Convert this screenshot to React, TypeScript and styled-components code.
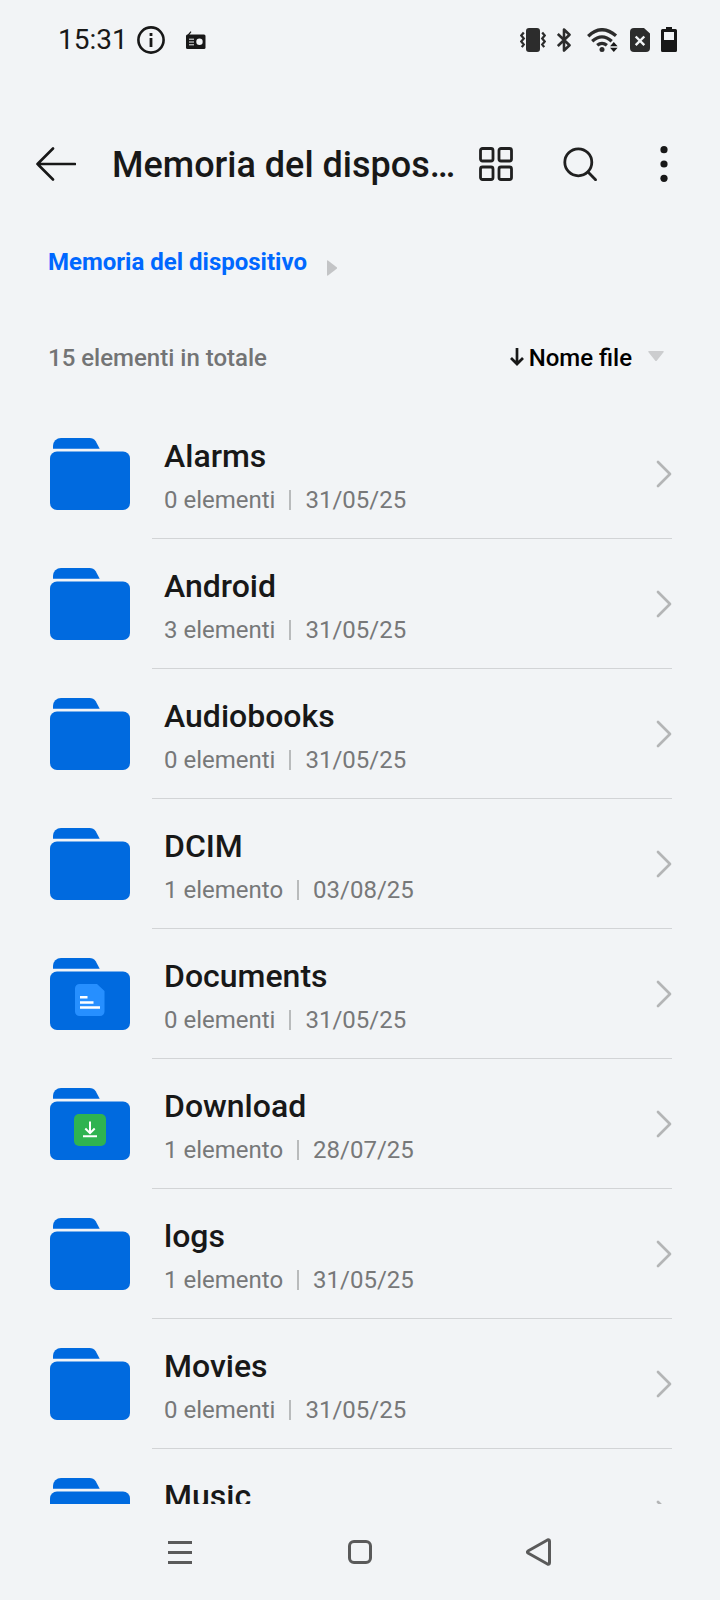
import React from "react";
import styled, { createGlobalStyle } from "styled-components";

const GlobalStyle = createGlobalStyle`
  * { box-sizing: border-box; }
  body {
    margin: 0;
    background: #f2f4f6;
    color: #181818;
    font-family: Roboto, "Liberation Sans", sans-serif;
  }
  button, select { font: inherit; color: inherit; background: none; border: 0; padding: 0; margin: 0; }
  svg { display: block; flex: none; }
`;

const Screen = styled.div`
  display: flex;
  flex-direction: column;
  height: 100vh;
`;

const StatusBar = styled.div`
  display: flex;
  flex: none;
  align-items: center;
  justify-content: space-between;
  height: 80px;
  padding: 0 43px 0 58px;
`;

const StatusGroup = styled.div<{ $gap: number }>`
  display: flex;
  align-items: center;
  gap: ${(p) => p.$gap}px;
`;

const Clock = styled.time`
  font-size: 28px;
  line-height: 32px;
`;

const Header = styled.header`
  display: flex;
  flex: none;
  align-items: center;
  height: 96px;
  margin-top: 36px;
  padding: 0 39px 0 36px;
`;

const Title = styled.h1`
  flex: 1;
  min-width: 0;
  margin: 0 20px 0 36px;
  padding-top: 2px;
  overflow: hidden;
  font-size: 36px;
  font-weight: 500;
  line-height: 48px;
  text-overflow: ellipsis;
  white-space: nowrap;
`;

const Actions = styled.div`
  display: flex;
  gap: 50px;
`;

const IconButton = styled.button`
  display: flex;
  flex: none;
  align-items: center;
  justify-content: center;
  cursor: pointer;
`;

const Breadcrumbs = styled.nav`
  display: flex;
  flex: none;
  align-items: center;
  gap: 20px;
  height: 100px;
  padding: 0 48px;

  svg { margin-top: 12px; }
`;

const CrumbLink = styled.a`
  color: #0068ff;
  font-size: 24px;
  font-weight: 700;
  line-height: 32px;
  text-decoration: none;
`;

const Summary = styled.div`
  display: flex;
  flex: none;
  align-items: center;
  justify-content: space-between;
  height: 92px;
  padding: 0 56px 0 48px;
  font-size: 24px;
  font-weight: 500;
  line-height: 32px;
`;

const Total = styled.span`
  color: #737475;
`;

const SortControl = styled.label`
  display: flex;
  align-items: center;
  color: #000;
`;

const SortSelect = styled.select`
  appearance: none;
  field-sizing: content;
  margin: 0 16px 0 5px;
  outline: 0;
`;

const FolderList = styled.ul`
  flex: 1;
  min-height: 0;
  margin: 0;
  padding: 5px 48px 0 50px;
  overflow: hidden;
  list-style: none;
`;

const FolderLink = styled.a`
  display: flex;
  align-items: center;
  gap: 22px;
  color: inherit;
  text-decoration: none;
`;

const RowBody = styled.div`
  display: flex;
  flex: 1;
  align-items: center;
  justify-content: space-between;
  height: 130px;
  padding-left: 12px;
  border-bottom: 1px solid #d2d4d6;
`;

const FolderText = styled.div`
  display: flex;
  flex-direction: column;
  gap: 8px;
`;

const FolderName = styled.span`
  font-size: 32px;
  font-weight: 500;
  line-height: 44px;
`;

const Meta = styled.span`
  display: flex;
  align-items: center;
  gap: 14px;
  color: #777879;
  font-size: 24px;
  line-height: 28px;
`;

const Separator = styled.i`
  width: 2px;
  height: 20px;
  background: #b9bbbc;
`;

const SystemNav = styled.nav`
  display: grid;
  flex: none;
  grid-template-columns: repeat(3, 1fr);
  height: 96px;
  padding: 0 12.5%;
`;

type Badge = "document" | "download";

const folders: { name: string; count: string; date: string; badge?: Badge }[] = [
  { name: "Alarms", count: "0 elementi", date: "31/05/25" },
  { name: "Android", count: "3 elementi", date: "31/05/25" },
  { name: "Audiobooks", count: "0 elementi", date: "31/05/25" },
  { name: "DCIM", count: "1 elemento", date: "03/08/25" },
  { name: "Documents", count: "0 elementi", date: "31/05/25", badge: "document" },
  { name: "Download", count: "1 elemento", date: "28/07/25", badge: "download" },
  { name: "logs", count: "1 elemento", date: "31/05/25" },
  { name: "Movies", count: "0 elementi", date: "31/05/25" },
  { name: "Music", count: "0 elementi", date: "31/05/25" },
];

const FolderIcon = ({ badge }: { badge?: Badge }) => (
  <svg width="80" height="72" viewBox="0 0 80 72" aria-hidden="true">
    <path d="M3 10.700V8a8 8 0 0 1 8-8h28.500q4 0 6.200 3.200L49.700 10.700Z" fill="#006adf" />
    <rect y="13.500" width="80" height="58.500" rx="7" fill="#006adf" />
    {badge === "document" && (
      <>
        <path d="M29.500 26H47l7.500 7v20.500a4.500 4.500 0 0 1-4.500 4.500H29.500a4.500 4.500 0 0 1-4.500-4.500v-23a4.500 4.500 0 0 1 4.500-4.500Z" fill="#268fff" />
        <path d="M30 39.200h7.500M30 44.400h13.500M30 49.500h20" stroke="#fff" strokeWidth="2.500" />
      </>
    )}
    {badge === "download" && (
      <>
        <rect x="24" y="26" width="32" height="32" rx="5" fill="#2fb350" />
        <path d="M40 33.500V45M35.300 40.500 40 45.200l4.700-4.700M33 48.300h14" fill="none" stroke="#fff" strokeWidth="2" />
      </>
    )}
  </svg>
);

const ChevronIcon = () => (
  <svg width="16" height="28" viewBox="0 0 16 28" fill="none" stroke="#b4b5b6" strokeWidth="2.700" strokeLinecap="round" strokeLinejoin="round" aria-hidden="true">
    <path d="M2 2 14 14 2 26" />
  </svg>
);

const InfoIcon = () => (
  <svg width="28" height="28" viewBox="0 0 28 28" fill="none" stroke="#181818" aria-hidden="true">
    <circle cx="14" cy="14" r="12.600" strokeWidth="2.600" />
    <path d="M14 12v9" strokeWidth="2.800" />
    <path d="M14 7v3" strokeWidth="2.800" />
  </svg>
);

const RadioIcon = () => (
  <svg width="20" height="18" viewBox="0 0 20 18" aria-hidden="true">
    <path d="M1.500 5 5 .7" stroke="#181818" strokeWidth="1.200" />
    <rect x="0" y="3.500" width="19.500" height="14.500" rx="1.500" fill="#181818" />
    <path d="M3 8.200h5M3 11h5M3 13.800h5" stroke="#f2f4f6" strokeWidth="1" />
    <circle cx="13.500" cy="10.800" r="3.200" fill="#f2f4f6" />
  </svg>
);

const VibrateIcon = () => (
  <svg width="26" height="24" viewBox="0 0 26 24" aria-hidden="true">
    <rect x="6" width="14" height="24" rx="3" fill="#2c2c2c" />
    <path d="M3.800 4.500 1.300 7.500l2.500 3-2.500 3 2.500 3-2 2.700M22.200 4.500l2.500 3-2.500 3 2.500 3-2.500 3 2 2.700" fill="none" stroke="#2c2c2c" strokeWidth="2.200" />
  </svg>
);

const BluetoothIcon = () => (
  <svg width="14" height="24" viewBox="0 0 14 24" fill="none" stroke="#2c2c2c" strokeWidth="2.600" strokeLinejoin="round" aria-hidden="true">
    <path d="M.8 6 12.500 17.300 7 22.500v-21l5.500 5.200L.8 18" />
  </svg>
);

const WifiIcon = () => (
  <svg width="32" height="24" viewBox="0 0 32 24" fill="none" stroke="#2c2c2c" strokeWidth="3.300" aria-hidden="true">
    <path d="M1.200 8.200Q14.500-4.600 29 7.800" />
    <path d="M5.200 13.200q9.800-8.700 19.500 0" />
    <path d="M10.200 17.300q4.800-3.900 9.700 0" />
    <circle cx="15" cy="21.500" r="2.500" fill="#2c2c2c" stroke="none" />
    <path d="m23 18.300 3.800-4.300 3.800 4.300ZM23 19.700l3.800 4.300 3.800-4.300Z" fill="#181818" stroke="none" />
  </svg>
);

const SimIcon = () => (
  <svg width="20" height="24" viewBox="0 0 20 24" aria-hidden="true">
    <path d="M4 0h10l6 5.500V20a4 4 0 0 1-4 4H4a4 4 0 0 1-4-4V4a4 4 0 0 1 4-4Z" fill="#2c2c2c" />
    <path d="m5.700 8.500 8.600 8.600m0-8.600-8.600 8.600" stroke="#f2f4f6" strokeWidth="2.400" />
  </svg>
);

const BatteryIcon = () => (
  <svg width="16" height="26" viewBox="0 0 16 26" aria-hidden="true">
    <path d="M5 0h6v2h3.500Q16 2 16 3.500v20q0 1.500-1.500 1.500h-13Q0 25 0 23.500v-20Q0 2 1.500 2H5Z" fill="#181818" />
    <path d="M3 5h10v8H3Z" fill="#f2f4f6" />
  </svg>
);

const BackIcon = () => (
  <svg width="40" height="34" viewBox="0 0 40 34" fill="none" stroke="#181818" strokeWidth="2.600" strokeLinecap="round" strokeLinejoin="round" aria-hidden="true">
    <path d="M17 1.500 1.500 17 17 32.500M1.500 17H39" />
  </svg>
);

const GridIcon = () => (
  <svg width="34" height="34" viewBox="0 0 34 34" fill="none" stroke="#202020" strokeWidth="2.800" aria-hidden="true">
    <rect x="1.500" y="1.500" width="12.500" height="12.500" rx="2" />
    <rect x="20" y="1.500" width="12.500" height="12.500" rx="2" />
    <rect x="1.500" y="20" width="12.500" height="12.500" rx="2" />
    <rect x="20" y="20" width="12.500" height="12.500" rx="2" />
  </svg>
);

const SearchIcon = () => (
  <svg width="34" height="34" viewBox="0 0 34 34" fill="none" stroke="#202020" strokeWidth="2.800" aria-hidden="true">
    <circle cx="15.300" cy="15.300" r="13.500" />
    <path d="m25 25 8.500 8.700" />
  </svg>
);

const MoreIcon = () => (
  <svg width="34" height="36" viewBox="0 0 34 36" fill="#181818" aria-hidden="true">
    <circle cx="17" cy="3.700" r="3.600" />
    <circle cx="17" cy="18" r="3.600" />
    <circle cx="17" cy="32.300" r="3.600" />
  </svg>
);

export default function App() {
  return (
    <Screen>
      <GlobalStyle />
      <StatusBar>
        <StatusGroup $gap={9}>
          <Clock>15:31</Clock>
          <StatusGroup $gap={21}>
            <InfoIcon />
            <RadioIcon />
          </StatusGroup>
        </StatusGroup>
        <StatusGroup $gap={11}>
          <VibrateIcon />
          <StatusGroup $gap={16}>
            <BluetoothIcon />
            <WifiIcon />
          </StatusGroup>
          <SimIcon />
          <BatteryIcon />
        </StatusGroup>
      </StatusBar>

      <Header>
        <IconButton aria-label="Indietro"><BackIcon /></IconButton>
        <Title>Memoria del dispositivo</Title>
        <Actions>
          <IconButton aria-label="Vista griglia"><GridIcon /></IconButton>
          <IconButton aria-label="Cerca"><SearchIcon /></IconButton>
          <IconButton aria-label="Altre opzioni"><MoreIcon /></IconButton>
        </Actions>
      </Header>

      <Breadcrumbs aria-label="Percorso">
        <CrumbLink href="#">Memoria del dispositivo</CrumbLink>
        <svg width="10" height="16" viewBox="0 0 10 16" aria-hidden="true">
          <path d="M0 1q0-1 1-.5l9 7v1l-9 7q-1 .5-1-.5Z" fill="#c3c4c6" />
        </svg>
      </Breadcrumbs>

      <Summary>
        <Total>15 elementi in totale</Total>
        <SortControl>
          <svg width="14" height="20" viewBox="0 0 14 20" fill="none" stroke="#181818" strokeWidth="2.700" aria-hidden="true">
            <path d="M7 0v16M1 10l6 6 6-6" />
          </svg>
          <SortSelect aria-label="Ordina per" defaultValue="name">
            <option value="name">Nome file</option>
            <option value="date">Data</option>
            <option value="type">Tipo</option>
          </SortSelect>
          <svg width="16" height="14" viewBox="0 0 16 14" aria-hidden="true">
            <path d="M1 0h14q1.500 0 .5 1.200L8.500 10h-1L.5 1.200Q-.5 0 1 0Z" fill="#cccdcf" />
          </svg>
        </SortControl>
      </Summary>

      <FolderList>
        {folders.map((f) => (
          <li key={f.name}>
            <FolderLink href="#">
              <FolderIcon badge={f.badge} />
              <RowBody>
                <FolderText>
                  <FolderName>{f.name}</FolderName>
                  <Meta>
                    <span>{f.count}</span>
                    <Separator />
                    <span>{f.date}</span>
                  </Meta>
                </FolderText>
                <ChevronIcon />
              </RowBody>
            </FolderLink>
          </li>
        ))}
      </FolderList>

      <SystemNav aria-label="Navigazione di sistema">
        <IconButton aria-label="App recenti">
          <svg width="24" height="24" viewBox="0 0 24 24" aria-hidden="true">
            <path d="M0 2.500h24M0 12.500h24M0 22.500h24" stroke="#5a5a5a" strokeWidth="3" />
          </svg>
        </IconButton>
        <IconButton aria-label="Home">
          <svg width="24" height="24" viewBox="0 0 24 24" fill="none" aria-hidden="true">
            <rect x="1.500" y="1.500" width="21" height="21" rx="4.500" stroke="#5a5a5a" strokeWidth="3" />
          </svg>
        </IconButton>
        <IconButton aria-label="Indietro di sistema">
          <svg width="28" height="28" viewBox="0 0 28 28" fill="none" aria-hidden="true">
            <path d="M21.500 2 2.400 12.700q-2 1.300 0 2.600L21.500 26q2 .8 2-1.500v-21q0-2.300-2-1.500Z" stroke="#5a5a5a" strokeWidth="3" strokeLinejoin="round" />
          </svg>
        </IconButton>
      </SystemNav>
    </Screen>
  );
}
